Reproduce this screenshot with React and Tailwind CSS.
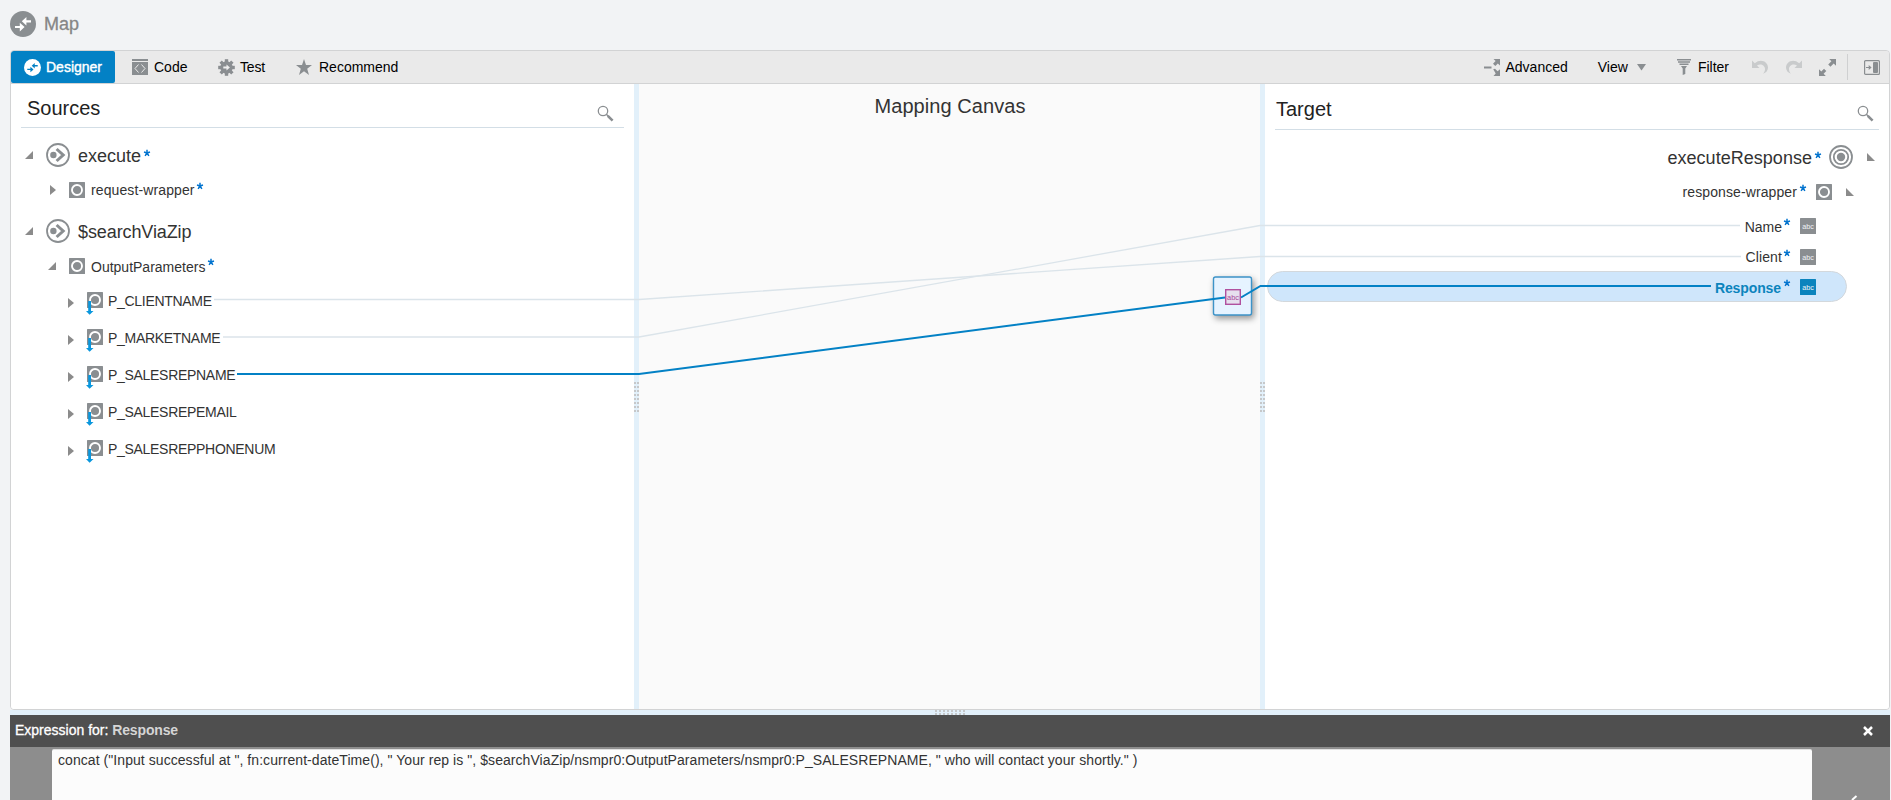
import React from "react";

const GRAY = "#8a8e91";
const BLUE = "#0381c5";

function Swap({ size, bg, fg }) {
  return (
    <svg width={size} height={size} viewBox="0 0 26 26" className="block shrink-0">
      <circle cx="13" cy="13" r="13" fill={bg} />
      <path d="M5 14.900h4.800v-3.200l4.800 4.300-4.800 4.400v-3.400H5z" fill={fg} />
      <path d="M21 11.400h-4.600v3.200l-4.600-4.300 4.600-4.300v3.300H21z" fill={fg} />
      <path d="M10.500 10.800l5.500 4.800" stroke={bg} strokeWidth="0.900" />
    </svg>
  );
}

function OpIcon() {
  return (
    <svg width="24" height="24" viewBox="0 0 24 24" className="block shrink-0">
      <circle cx="12" cy="12" r="11" fill="#fff" stroke={GRAY} strokeWidth="1.8" />
      <circle cx="7.4" cy="12" r="3.2" fill={GRAY} />
      <path d="M10.600 6l6.600 6-6.600 6" fill="none" stroke={GRAY} strokeWidth="3" />
    </svg>
  );
}

function TargetIcon() {
  return (
    <svg width="24" height="24" viewBox="0 0 24 24" className="block shrink-0">
      <g fill="none" stroke={GRAY}>
        <circle cx="12" cy="12" r="11" strokeWidth="1.8" />
        <circle cx="12" cy="12" r="7.200" strokeWidth="1.8" />
      </g>
      <circle cx="12" cy="12" r="4.2" fill={GRAY} />
    </svg>
  );
}

function ElementIcon() {
  return (
    <svg width="16" height="16" viewBox="0 0 16 16" className="block shrink-0">
      <rect width="16" height="16" rx="0.5" fill={GRAY} />
      <circle cx="8" cy="8" r="5" fill="none" stroke="#fff" strokeWidth="1.9" />
    </svg>
  );
}

function ArrayIcon() {
  return (
    <svg width="18" height="24" viewBox="0 0 18 24" className="block shrink-0">
      <rect x="1" width="16" height="16" rx="0.5" fill={GRAY} />
      <circle cx="9" cy="8" r="5" fill="none" stroke="#fff" strokeWidth="1.9" />
      <path d="M2.2 9h2.8v10h2.500L3.6 22.800 0 19h2.2z" fill="#0b97dd" />
    </svg>
  );
}

function AbcIcon({ color }) {
  return (
    <svg width="16" height="16" viewBox="0 0 16 16" className="block shrink-0">
      <rect width="16" height="16" rx="0.5" fill={color} />
      <text x="8" y="10.8" textAnchor="middle" fontSize="7.2" fill="#f0f4f6" fontFamily="Liberation Sans, sans-serif">abc</text>
    </svg>
  );
}

function Open({ flip }) {
  return (
    <svg width="8" height="8" viewBox="0 0 8 8" className="block shrink-0">
      <path d={flip ? "M0 0v8h8z" : "M8 0v8H0z"} fill="#8b8b8b" />
    </svg>
  );
}

function Closed() {
  return (
    <svg width="6" height="10" viewBox="0 0 6 10" className="block shrink-0">
      <path d="M0 0l6 5-6 5z" fill="#8b8b8b" />
    </svg>
  );
}

function SearchIcon() {
  return (
    <svg width="17" height="17" viewBox="0 0 17 17" className="block shrink-0">
      <circle cx="6" cy="6" r="4.7" fill="none" stroke={GRAY} strokeWidth="1.3" />
      <path d="M9.3 9.3l2 2" stroke={GRAY} strokeWidth="1.4" />
      <path d="M10.8 10.8l4.8 4.8" stroke={GRAY} strokeWidth="2.6" />
    </svg>
  );
}

function Star() {
  return (
    <svg width="6" height="6" viewBox="0 0 6 6" className="block shrink-0 overflow-visible">
      <path d="M3 3V-0.200M3 3L0 2M3 3L6 2M3 3L1.100 5.800M3 3L4.900 5.800" stroke="#0374cf" strokeWidth="1.500" />
    </svg>
  );
}

function Dots({ cols, rows }) {
  const cells = [];
  for (let r = 0; r < rows; r++)
    for (let c = 0; c < cols; c++)
      cells.push(<rect key={r + "-" + c} x={c * (cols > 2 ? 4 : 3)} y={r * (rows > 2 ? 4 : 3)} width="2" height="2" fill="#c6c8ca" />);
  const w = cols > 2 ? cols * 4 - 2 : 5;
  const h = rows > 2 ? rows * 4 - 2 : 5;
  return (
    <svg width={w} height={h} className="block shrink-0">{cells}</svg>
  );
}

const fields = ["P_CLIENTNAME", "P_MARKETNAME", "P_SALESREPNAME", "P_SALESREPEMAIL", "P_SALESREPPHONENUM"];

function Sources() {
  return (
    <section className="flex w-[623px] shrink-0 flex-col bg-white">
      <div className="ml-[10px] mr-[10px] flex h-11 items-start justify-between border-b border-[#d3dee6] pl-[6px] pr-[10px]">
        <h2 className="mt-[10px] text-[20px] leading-[28px] text-[#222]">Sources</h2>
        <div className="mt-[21px]"><SearchIcon /></div>
      </div>
      <div className="mt-[9px] flex h-9 items-center pl-[14px]">
        <Open />
        <div className="ml-[13px]"><OpIcon /></div>
        <span className="ml-2 mt-[2px] text-[18px] leading-6 text-[#333]">execute</span>
        <div className="-mt-[4px] ml-[3px]"><Star /></div>
      </div>
      <div className="flex h-[34px] items-center pl-[39px]">
        <Closed />
        <div className="ml-[13px]"><ElementIcon /></div>
        <span className="ml-[6px] text-[14px] leading-5 tracking-[0.11px] text-[#333]">request-wrapper</span>
        <div className="-mt-[8px] ml-[2px]"><Star /></div>
      </div>
      <div className="mt-[6px] flex h-9 items-center pl-[14px]">
        <Open />
        <div className="ml-[13px]"><OpIcon /></div>
        <span className="ml-2 mt-[2px] text-[18px] leading-6 tracking-[-0.1px] text-[#333]">$searchViaZip</span>
      </div>
      <div className="flex h-[34px] items-center pl-[37px]">
        <Open />
        <div className="ml-[13px]"><ElementIcon /></div>
        <span className="ml-[6px] mt-[2px] text-[14px] leading-5 text-[#333]">OutputParameters</span>
        <div className="-mt-[8px] ml-[3px]"><Star /></div>
      </div>
      {fields.map((name) => (
        <div key={name} className="flex h-[37px] items-center pl-[57px] text-[14px] leading-5 tracking-[-0.3px] text-[#333]">
          <div className="mt-[3px]"><Closed /></div>
          <div className="mt-[4px] ml-3"><ArrayIcon /></div>
          <span className="-mt-[1px] ml-1">{name}</span>
        </div>
      ))}
    </section>
  );
}

function Target() {
  return (
    <section className="flex min-w-0 flex-1 flex-col bg-white">
      <div className="ml-[10px] mr-[10px] flex h-[46px] items-start justify-between border-b border-[#d3dee6] pl-[1px] pr-[5px]">
        <h2 className="mt-[11px] text-[20px] leading-[28px] text-[#222]">Target</h2>
        <div className="mt-[21px]"><SearchIcon /></div>
      </div>
      <div className="mt-[9px] flex h-9 items-center justify-end pr-[14px]">
        <span className="mt-[2px] text-[18px] leading-6 tracking-[0.03px] text-[#333]">executeResponse</span>
        <div className="-mt-[4px] ml-[3px]"><Star /></div>
        <div className="ml-2"><TargetIcon /></div>
        <div className="ml-[14px]"><Open flip /></div>
      </div>
      <div className="flex h-[34px] items-center justify-end pr-[35px]">
        <span className="text-[14px] leading-5 tracking-[0.1px] text-[#333]">response-wrapper</span>
        <div className="-mt-[8px] ml-[3px]"><Star /></div>
        <div className="ml-[10px]"><ElementIcon /></div>
        <div className="ml-[14px]"><Open flip /></div>
      </div>
      <div className="mt-[2px] flex h-[31px] items-center justify-end pr-[73px]">
        <span className="text-[14px] leading-5 text-[#333]">Name</span>
        <div className="-mt-[9px] ml-[2px]"><Star /></div>
        <div className="-mt-px ml-[10px]"><AbcIcon color={GRAY} /></div>
      </div>
      <div className="flex h-[30px] items-center justify-end pr-[73px]">
        <span className="text-[14px] leading-5 tracking-[0.1px] text-[#333]">Client</span>
        <div className="-mt-[9px] ml-[2px]"><Star /></div>
        <div className="-mt-px ml-[10px]"><AbcIcon color={GRAY} /></div>
      </div>
      <div className="-mt-[1px] ml-[2px] mr-[42px] flex h-[31px] items-center justify-end rounded-full border border-[#d3d8dc] bg-[#cfe6fb] pr-[30px]">
        <span className="mt-[2px] text-[14px] font-bold leading-5 tracking-[-0.1px] text-[#0b84bd]">Response</span>
        <div className="-mt-[7px] ml-[3px]"><Star /></div>
        <div className="ml-[10px]"><AbcIcon color="#0b84bd" /></div>
      </div>
    </section>
  );
}

function Wires() {
  return (
    <svg width="1878" height="625" viewBox="11 84 1878 625" className="pointer-events-none absolute left-0 top-0">
      <g fill="none" stroke="#dbe4ea" strokeWidth="1.3">
        <path d="M214 299.5H639L1260 256.5H1741" />
        <path d="M223 337H639L1260 225.5H1740" />
      </g>
      <rect x="1213.5" y="277" width="38" height="38" rx="2" fill="#e6f3ff" stroke="#3c93c8" strokeWidth="1.4" className="drop-shadow-[2px_3px_3px_rgba(0,0,0,0.4)]" />
      <path d="M237 374H639L1225 297.5M1241 297.5L1260.500 286H1711" fill="none" stroke={BLUE} strokeWidth="2" />
      <rect x="1225.700" y="289.700" width="14.600" height="14.600" fill="#e6e0ee" stroke="#b0519f" strokeWidth="1.4" />
      <text x="1233" y="300" textAnchor="middle" fontSize="7.400" fill="#a8479a" fontFamily="Liberation Sans, sans-serif">abc</text>
    </svg>
  );
}

function Toolbar() {
  return (
    <div className="flex h-[33px] shrink-0 items-center border-b border-[#d2d3d4] bg-[#eaeaea] text-[14px] leading-5 text-black">
      <div className="flex h-8 w-[104px] items-center rounded-[2px] bg-[#0381c5] pl-[13px] text-white">
        <Swap size={17} bg="#fff" fg={BLUE} />
        <span className="ml-[5px] [-webkit-text-stroke:0.4px_white]">Designer</span>
      </div>
      <svg width="16" height="16" viewBox="0 0 16 16" className="ml-[17px] shrink-0">
        <path d="M0 0h16v2H0zM0 3h16v13H0z" fill={GRAY} />
        <path d="M6.500 5.500L3 9.500l3.500 4M9.500 5.500l3.500 4-3.500 4" fill="none" stroke="#eaeaea" strokeWidth="1" />
      </svg>
      <span className="ml-[6px] w-[34px]">Code</span>
      <svg width="17" height="17" viewBox="-8.500 -8.500 17 17" className="ml-[30px] shrink-0">
        <circle r="6.200" fill={GRAY} />
        {[0, 45, 90, 135].map((a) => (
          <rect key={a} x="-1.700" y="-8.300" width="3.400" height="16.600" fill={GRAY} transform={`rotate(${a})`} />
        ))}
        <path d="M-3.200-1H0v-2l3.400 3L0 3V1h-3.200z" fill="#eee" />
      </svg>
      <span className="ml-[5px] w-[26px] tracking-[-0.2px]">Test</span>
      <svg width="16" height="16" viewBox="0 0 16 16" className="ml-[30px] shrink-0">
        <path d="M8 0l2 5.900 6 .1-4.800 3.800L13 16l-5-3.700L3 16l1.800-6.200L0 6l6-.1z" fill={GRAY} />
      </svg>
      <span className="ml-[7px]">Recommend</span>

      <div className="ml-auto flex items-center">
        <svg width="16" height="17" viewBox="0 0 16 17" className="shrink-0" fill={GRAY}>
          <path d="M0 7.500h7.500v2H0zM9.500 0H16v6.500l-2.200-2L11.300 7 9 4.800l2.600-2.700zM9.200 10.200l1.800-.5 2.600 2.600 2.400-2v6.700H9.500l2.200-2.500z" />
        </svg>
        <span className="ml-[6px]">Advanced</span>
        <span className="ml-[30px]">View</span>
        <svg width="9" height="7" viewBox="0 0 9 7" className="ml-[9px] mt-[1px]"><path d="M0 0h9L4.500 6.500z" fill={GRAY} /></svg>
        <svg width="14" height="16" viewBox="0 0 14 16" className="ml-[31px]">
          <path d="M0 0h14v1.500H0zM1 2.300h12v1.500H1zM2.500 4.600h9v1.500h-9zM4 7h6L8.300 9.500V15l-2.600 1V9.500z" fill={GRAY} />
        </svg>
        <span className="ml-[7px]">Filter</span>
        <svg width="16" height="14" viewBox="0 0 16 14" className="ml-[23px]" fill="#c9cbcc">
          <path d="M0 .5v7.500h7.500L5 5.600c3.500-2.400 8-.2 8 3.400 0 1.900-.6 3.400-2 4.800 3-1 5-3.300 5-6.300C16 1.500 8.500-2 2.800 3.200z" />
        </svg>
        <svg width="16" height="14" viewBox="0 0 16 14" className="ml-[18px]" fill="#c9cbcc">
          <path transform="matrix(-1 0 0 1 16 0)" d="M0 .5v7.500h7.500L5 5.600c3.500-2.400 8-.2 8 3.400 0 1.900-.6 3.400-2 4.800 3-1 5-3.300 5-6.300C16 1.500 8.500-2 2.800 3.200z" />
        </svg>
        <svg width="17" height="17" viewBox="0 0 17 17" className="ml-[17px]" fill={GRAY}>
          <path d="M10.200 0H17v6.800l-2.300-2.200-3.200 3.200-2.300-2.300 3.200-3.200zM0 10.200l2.300 2.200 2.700-2.700 2.300 2.300-2.700 2.700L6.800 17H0z" />
        </svg>
        <div className="ml-[11px] h-[26px] w-px bg-[#cfd0d1]" />
        <svg width="16" height="15" viewBox="0 0 16 15" className="ml-4 mr-[9px]">
          <rect x=".6" y=".6" width="14.800" height="13.800" rx="1" fill="none" stroke={GRAY} strokeWidth="1.200" />
          <rect x="9" y="2" width="5" height="11" rx="1" fill={GRAY} />
          <path d="M2 6.900h2.700V5L7.600 7.500 4.700 10V8.100H2z" fill={GRAY} />
        </svg>
      </div>
    </div>
  );
}

export default function App() {
  return (
    <div className="flex h-[800px] w-[1891px] flex-col overflow-hidden bg-[#f2f3f5] font-['Liberation_Sans',Arial,sans-serif]">
      <header className="flex h-[50px] shrink-0 items-center pb-[2px] pl-[10px]">
        <Swap size={26} bg={GRAY} fg="#fff" />
        <span className="ml-2 text-[18px] leading-6 text-[#868686] [-webkit-text-stroke:0.3px_#868686]">Map</span>
      </header>
      <main className="ml-[10px] mr-[1px] flex h-[660px] shrink-0 flex-col overflow-hidden rounded-[4px] border border-[#d2d3d4]">
        <Toolbar />
        <div className="relative flex min-h-0 flex-1">
          <Sources />
          <div className="flex w-[5px] shrink-0 flex-col bg-[#e2f0fa] pt-[298px]"><Dots cols={2} rows={8} /></div>
          <section className="w-[621px] shrink-0 bg-[#fafafa] pt-2 text-center">
            <h2 className="pl-px text-[20px] leading-[28px] tracking-[0.06px] text-[#333]">Mapping Canvas</h2>
          </section>
          <div className="flex w-[5px] shrink-0 flex-col bg-[#e2f0fa] pt-[298px]"><Dots cols={2} rows={8} /></div>
          <Target />
          <Wires />
        </div>
      </main>
      <div className="ml-[10px] mr-[1px] flex h-[5px] shrink-0 justify-center bg-[#e2f0fa]"><Dots cols={8} rows={2} /></div>
      <footer className="ml-[10px] mr-[1px] flex min-h-0 flex-1 flex-col bg-[#8d8d8d]">
        <div className="flex h-8 shrink-0 items-center justify-between bg-[#4f4f4f] pl-[5px] pr-[17px] text-[14px] leading-5">
          <div className="-mt-[2px] text-white [-webkit-text-stroke:0.3px_white]">
            Expression for: <span className="font-bold tracking-[-0.15px] text-[#d5d5d5] [-webkit-text-stroke:0px]">Response</span>
          </div>
          <svg width="10" height="10" viewBox="0 0 10 10"><path d="M1 1l8 8M9 1l-8 8" stroke="#fff" strokeWidth="2.500" /></svg>
        </div>
        <div className="flex min-h-0 flex-1 pl-[42px]">
          <div className="mt-[2px] w-[1760px] rounded-t-[2px] border-t border-[#e0e0e0] bg-[#fcfcfc] pl-[6px] text-[14px] leading-[21px] tracking-[0.062px] whitespace-pre text-[#333]">concat ("Input successful at ", fn:current-dateTime(), " Your rep is ", $searchViaZip/nsmpr0:OutputParameters/nsmpr0:P_SALESREPNAME, " who will contact your shortly." )</div>
          <svg width="10" height="5" viewBox="0 0 10 5" className="ml-9 mt-auto"><path d="M4 5L8.500 1" stroke="#fff" strokeWidth="2" /></svg>
        </div>
      </footer>
    </div>
  );
}
